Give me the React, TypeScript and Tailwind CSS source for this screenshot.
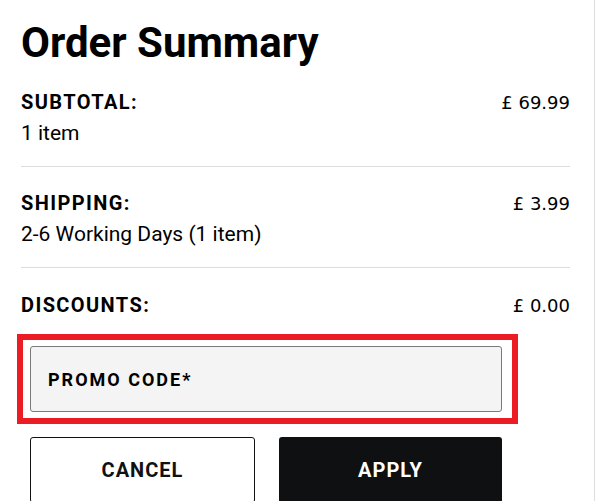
import React from 'react';

const rows = [
  { label: 'SUBTOTAL:', note: '1 item', price: '£ 69.99' },
  { label: 'SHIPPING:', note: '2-6 Working Days (1 item)', price: '£ 3.99' },
];

export default function App() {
  return (
    <div className="min-h-screen bg-white font-['Roboto',sans-serif] text-black">
      <div className="min-h-screen w-[595px] border-r border-[#dddddd] pl-[21px] pr-[24px] pt-[19px]">
        <h1 className="text-[42px] font-bold leading-[48px]">Order Summary</h1>

        <div className="mt-[20px]">
          {rows.map((row) => (
            <div key={row.label} className="border-b border-[#dddddd] pb-[17px] [&:not(:first-child)]:pt-[21px]">
              <div className="flex items-start justify-between">
                <div>
                  <div className="text-[20px] font-bold leading-[31px] tracking-[1.4px]">{row.label}</div>
                  <div className="text-[21px] leading-[31px]">{row.note}</div>
                </div>
                <div className="font-['DejaVu_Sans',sans-serif] text-[18px] leading-[31px]">{row.price}</div>
              </div>
            </div>
          ))}

          <div className="flex items-start justify-between pt-[22px]">
            <div className="text-[20px] font-bold leading-[31px] tracking-[1.4px]">DISCOUNTS:</div>
            <div className="font-['DejaVu_Sans',sans-serif] text-[18px] leading-[31px]">£ 0.00</div>
          </div>
        </div>

        <div className="mt-[13px] -ml-[4px] w-[501px] border-[6px] border-[#ec1c24] py-[6px] pl-[7px] pr-[10px]">
          <div className="flex h-[66px] w-[472px] items-center rounded-[3px] border border-[#7a7a7a] bg-[#f4f4f4] pl-[17px]">
            <span className="text-[18px] font-bold tracking-[2px]">PROMO CODE*</span>
          </div>
        </div>

        <div className="mt-[13px] ml-[9px] flex w-[472px] gap-[24px]">
          <button className="flex h-[66px] flex-1 items-center justify-center rounded-[3px] border border-[#111111] bg-white text-[20px] font-bold tracking-[1px] text-[#111111]">
            CANCEL
          </button>
          <button className="flex h-[66px] flex-1 items-center justify-center rounded-[3px] bg-[#0e1011] text-[20px] font-bold tracking-[1px] text-white">
            APPLY
          </button>
        </div>
      </div>
    </div>
  );
}
